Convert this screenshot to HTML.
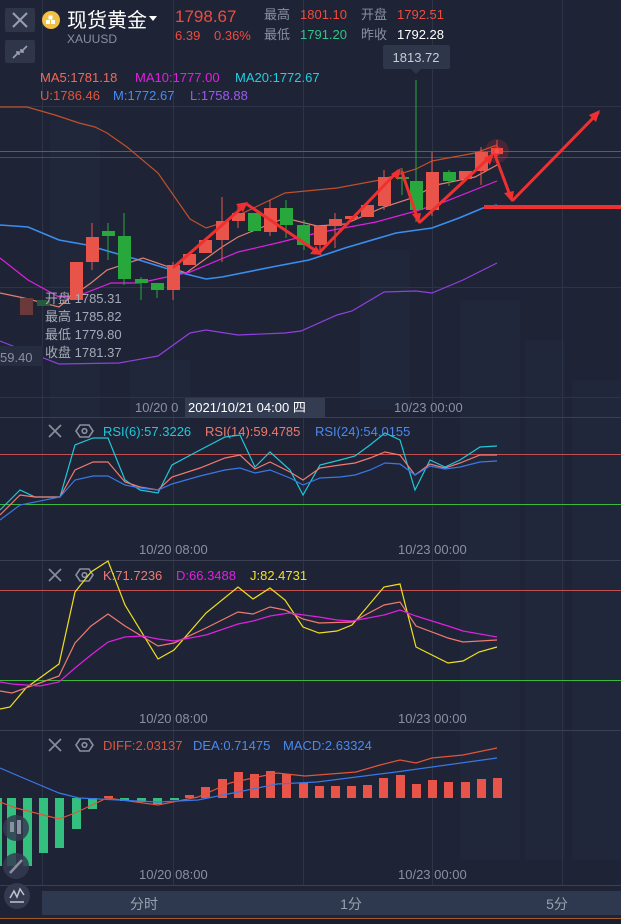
<!DOCTYPE html>
<html><head><meta charset="utf-8"><style>
html,body{margin:0;padding:0;background:#1e2336;width:621px;height:924px;overflow:hidden}
svg{display:block}
text{font-family:"Liberation Sans","Noto Sans CJK SC",sans-serif}
</style></head><body>
<svg width="621" height="924" viewBox="0 0 621 924" xmlns="http://www.w3.org/2000/svg">
<rect width="621" height="924" fill="#1e2336"/>
<!-- faint buildings -->
<g fill="#21273a">
<rect x="460" y="300" width="60" height="560"/><rect x="525" y="340" width="40" height="520"/><rect x="572" y="380" width="49" height="480"/>
<rect x="50" y="120" width="50" height="300"/><rect x="130" y="360" width="60" height="60"/><rect x="360" y="250" width="50" height="160"/>
</g>
<!-- grid -->
<g stroke="#2e3447" stroke-width="1">
<line x1="42.5" y1="0" x2="42.5" y2="885"/><line x1="173.5" y1="0" x2="173.5" y2="885"/><line x1="303.5" y1="0" x2="303.5" y2="885"/><line x1="432.5" y1="0" x2="432.5" y2="885"/><line x1="562.5" y1="0" x2="562.5" y2="885"/>
<line x1="0" y1="106.5" x2="621" y2="106.5"/><line x1="0" y1="287.5" x2="621" y2="287.5"/><line x1="0" y1="397.5" x2="621" y2="397.5"/>
</g>
<g stroke="#3a4052"><line x1="0" y1="417.5" x2="621" y2="417.5"/><line x1="0" y1="560.5" x2="621" y2="560.5"/><line x1="0" y1="730.5" x2="621" y2="730.5"/><line x1="0" y1="885.5" x2="621" y2="885.5"/></g>
<line x1="0" y1="151.5" x2="621" y2="151.5" stroke="#7a5058"/>
<line x1="0" y1="157.5" x2="621" y2="157.5" stroke="#454b60"/>

<!-- top-left buttons -->
<rect x="5" y="8" width="30" height="24" rx="2" fill="#30364a"/>
<path d="M13 13 L27 27 M27 13 L13 27" stroke="#9aa0ae" stroke-width="2"/>
<rect x="5" y="40" width="30" height="23" rx="2" fill="#30364a"/>
<path d="M13 58 L19 52 M16 52 L19 52 L19 55 M27 46 L21 52 M21 49 L21 52 L24 52" stroke="#9aa0ae" stroke-width="1.6" fill="none"/>

<!-- header -->
<circle cx="51" cy="20" r="9" fill="#f1c042"/>
<rect x="46" y="20" width="4" height="4" fill="#fff"/><rect x="51" y="20" width="4" height="4" fill="#fff"/><rect x="48.5" y="15.5" width="4" height="4" fill="#fff"/>
<text x="67" y="27" font-size="20" fill="#fff">现货黄金</text>
<path d="M149 16 L157 16 L153 21 Z" fill="#fff"/>
<text x="67" y="43" font-size="12" fill="#8a90a0">XAUUSD</text>
<text x="175" y="22" font-size="17" fill="#f04c3c">1798.67</text>
<text x="175" y="40" font-size="13" fill="#f04c3c">6.39</text>
<text x="214" y="40" font-size="13" fill="#f04c3c">0.36%</text>
<text x="264" y="19" font-size="13" fill="#8a90a0">最高</text>
<text x="300" y="19" font-size="13" fill="#f04c3c">1801.10</text>
<text x="361" y="19" font-size="13" fill="#8a90a0">开盘</text>
<text x="397" y="19" font-size="13" fill="#f04c3c">1792.51</text>
<text x="264" y="39" font-size="13" fill="#8a90a0">最低</text>
<text x="300" y="39" font-size="13" fill="#2fc48a">1791.20</text>
<text x="361" y="39" font-size="13" fill="#8a90a0">昨收</text>
<text x="397" y="39" font-size="13" fill="#fff">1792.28</text>

<text x="40" y="82" font-size="13" fill="#f06a5a">MA5:1781.18</text>
<text x="135" y="82" font-size="13" fill="#e020e0">MA10:1777.00</text>
<text x="235" y="82" font-size="13" fill="#20d0e0">MA20:1772.67</text>
<text x="40" y="100" font-size="13" fill="#e0553a">U:1786.46</text>
<text x="113" y="100" font-size="13" fill="#4a8af0">M:1772.67</text>
<text x="190" y="100" font-size="13" fill="#9a5af0">L:1758.88</text>

<!-- tooltip 1813.72 -->
<rect x="383" y="45" width="67" height="24" rx="2" fill="#2e3649"/>
<path d="M411 69 L421 69 L416 74 Z" fill="#2e3649"/>
<text x="416" y="62" font-size="13" fill="#c8ccd6" text-anchor="middle">1813.72</text>

<!-- bands & MAs -->
<g fill="none" stroke-width="1.2">
<polyline stroke="#c0502a" points="0,107 27,107 55,115 79,123 95,127 107,133 127,147 158,173 190,219 206,228 222,223 285,193 337,188 380,180 416,169 432,161 475,153 497,145"/>
<polyline stroke="#3a8ef0" stroke-width="1.6" points="0,225 28,227 59,240 87,245 111,252 139,260 178,272 206,279 222,277 277,266 309,260 345,248 396,233 432,228 459,218 483,208 497,205"/>
<polyline stroke="#9040e0" points="0,341 59,364 119,363 158,356 190,333 206,330 238,335 285,333 301,331 337,315 352,311 384,292 416,291 432,293 463,280 497,263"/>
<polyline stroke="#e08070" points="0,293 24,298 59,307 71,297 91,283 107,270 143,258 186,273 222,247 238,237 285,218 317,226 345,224 384,207 412,198 436,185 475,177 497,165"/>
<polyline stroke="#e020e0" points="0,258 28,280 59,297 75,297 111,283 139,283 190,272 238,252 277,243 317,233 376,222 416,211 444,202 497,181"/>
</g>

<!-- candles -->
<g>
<rect x="20" y="298" width="13" height="17" fill="#6a3a3a"/>
<rect x="37" y="300" width="13" height="6" fill="#275a3a"/>
<g fill="#e8544a" stroke="#e8544a">
<line x1="92" y1="223" x2="92" y2="270"/><line x1="238" y1="205" x2="238" y2="228"/><line x1="222" y1="197" x2="222" y2="262"/>
<line x1="270" y1="200" x2="270" y2="236"/><line x1="335" y1="213" x2="335" y2="248"/><line x1="384" y1="170" x2="384" y2="210"/>
<line x1="432" y1="152" x2="432" y2="216"/><line x1="481" y1="147" x2="481" y2="185"/><line x1="497" y1="140" x2="497" y2="165"/><line x1="320" y1="226" x2="320" y2="250"/>
</g>
<g fill="#28a83c" stroke="#28a83c">
<line x1="108" y1="223" x2="108" y2="260"/><line x1="124" y1="213" x2="124" y2="285"/><line x1="141" y1="277" x2="141" y2="300"/><line x1="286" y1="200" x2="286" y2="238"/><line x1="304" y1="220" x2="304" y2="250"/>
<line x1="416" y1="80" x2="416" y2="222"/><line x1="402" y1="168" x2="402" y2="195"/><line x1="449" y1="170" x2="449" y2="186"/>
</g>
<g fill="#e8544a">
<rect x="70" y="262" width="13" height="38"/><rect x="86" y="237" width="13" height="25"/><rect x="167" y="265" width="13" height="25"/>
<rect x="183" y="254" width="13" height="11"/><rect x="199" y="240" width="13" height="13"/><rect x="216" y="221" width="13" height="19"/>
<rect x="232" y="213" width="13" height="8"/><rect x="264" y="208" width="13" height="24"/><rect x="314" y="226" width="13" height="19"/>
<rect x="329" y="219" width="13" height="7"/><rect x="345" y="216" width="13" height="3"/><rect x="361" y="205" width="13" height="12"/>
<rect x="378" y="177" width="13" height="29"/><rect x="426" y="172" width="13" height="38"/><rect x="459" y="171" width="13" height="8"/>
<rect x="475" y="152" width="13" height="19"/><rect x="491" y="148" width="12" height="6"/>
</g>
<g fill="#28a83c">
<rect x="102" y="231" width="13" height="5"/><rect x="118" y="236" width="13" height="43"/><rect x="135" y="279" width="13" height="4"/>
<rect x="151" y="283" width="13" height="7"/><rect x="248" y="213" width="13" height="18"/><rect x="280" y="208" width="13" height="17"/>
<rect x="297" y="225" width="13" height="20"/><rect x="396" y="177" width="13" height="2"/><rect x="410" y="181" width="13" height="29"/>
<rect x="443" y="172" width="13" height="9"/>
</g>
</g>
<line x1="157" y1="283" x2="157" y2="298" stroke="#28a83c"/><line x1="173" y1="262" x2="173" y2="300" stroke="#e8544a"/>

<!-- glow -->
<circle cx="497" cy="151" r="12" fill="#ff3030" opacity="0.18"/><circle cx="497" cy="151" r="5" fill="#ff3030" opacity="0.45"/><circle cx="497" cy="151" r="2" fill="#ff5050"/>

<!-- red arrows -->
<g stroke="#f03030" stroke-width="3" fill="none" stroke-linecap="round">
<line x1="174" y1="267" x2="244" y2="206"/><line x1="248" y1="205" x2="319" y2="253"/>
<line x1="319" y1="253" x2="398" y2="171"/><line x1="402" y1="172" x2="418" y2="220"/>
<line x1="420" y1="222" x2="491" y2="156"/><line x1="495" y1="155" x2="511" y2="198"/>
<line x1="513" y1="200" x2="598" y2="113"/>
</g>
<g fill="#f03030">
<path d="M248 202 L236 204 L243 212 Z"/><path d="M322 255 L310 254 L316 246 Z"/><path d="M401 168 L398 180 L391 174 Z"/>
<path d="M419 224 L412 214 L421 213 Z"/><path d="M494 153 L490 165 L484 158 Z"/><path d="M512 202 L504 193 L514 191 Z"/>
<path d="M600 110 L596 122 L589 115 Z"/>
</g>
<rect x="484" y="205" width="137" height="4" fill="#f03030"/>

<!-- left tooltip -->
<g font-size="13" fill="#a6aab6">
<text x="45" y="303">开盘 1785.31</text><text x="45" y="321">最高 1785.82</text><text x="45" y="339">最低 1779.80</text><text x="45" y="357">收盘 1781.37</text>
</g>
<rect x="0" y="346" width="43" height="20" fill="#262d40"/>
<text x="0" y="362" font-size="13" fill="#8a90a0">59.40</text>

<!-- date axis main -->
<text x="135" y="412" font-size="13" fill="#8a90a0">10/20 0</text>
<rect x="185" y="398" width="140" height="19" fill="#343c52"/>
<text x="188" y="412" font-size="13" fill="#fff">2021/10/21 04:00 四</text>
<text x="394" y="412" font-size="13" fill="#8a90a0">10/23 00:00</text>

<!-- panel headers icons -->
<g stroke="#8a90a0" stroke-width="1.6" fill="none">
<path d="M49 425 L61 437 M61 425 L49 437"/><path d="M80 425 L89 425 L93 431 L89 437 L80 437 L76 431 Z"/><circle cx="84.5" cy="431" r="2.3"/>
<path d="M49 569 L61 581 M61 569 L49 581"/><path d="M80 569 L89 569 L93 575 L89 581 L80 581 L76 575 Z"/><circle cx="84.5" cy="575" r="2.3"/>
<path d="M49 739 L61 751 M61 739 L49 751"/><path d="M80 739 L89 739 L93 745 L89 751 L80 751 L76 745 Z"/><circle cx="84.5" cy="745" r="2.3"/>
</g>

<!-- RSI -->
<text x="103" y="436" font-size="13" fill="#20c8d8">RSI(6):57.3226</text>
<text x="205" y="436" font-size="13" fill="#f07a70">RSI(14):59.4785</text>
<text x="315" y="436" font-size="13" fill="#4a8af0">RSI(24):54.0155</text>
<line x1="0" y1="454.5" x2="621" y2="454.5" stroke="#c05050"/>
<line x1="0" y1="504.5" x2="621" y2="504.5" stroke="#3cb83c"/>
<g fill="none" stroke-width="1.2">
<polyline stroke="#20c8d8" points="0,510 10,500 20,490 35,497 60,497 75,445 93,438 108,438 125,480 140,490 158,493 172,465 200,450 225,437 240,435 255,467 270,452 290,470 303,495 320,465 340,460 355,456 370,445 385,433 400,440 415,490 430,460 445,467 460,460 480,447 497,446"/>
<polyline stroke="#f07a70" points="0,515 20,495 35,497 60,497 75,470 93,462 108,462 125,482 140,487 158,490 172,477 200,468 225,458 240,455 255,469 270,462 290,472 303,480 320,468 340,465 355,463 370,458 385,452 400,455 415,475 430,464 445,468 460,463 480,455 497,455"/>
<polyline stroke="#3a78e8" points="0,520 20,505 60,497 75,480 93,476 108,476 125,485 140,488 158,490 172,484 200,476 225,470 240,468 255,473 270,470 290,478 303,485 320,478 340,477 355,475 370,470 385,463 400,464 415,475 430,466 445,469 460,467 480,462 497,461"/>
</g>
<text x="139" y="554" font-size="13" fill="#8a90a0">10/20 08:00</text>
<text x="398" y="554" font-size="13" fill="#8a90a0">10/23 00:00</text>

<!-- KDJ -->
<text x="103" y="580" font-size="13" fill="#f07a70">K:71.7236</text>
<text x="176" y="580" font-size="13" fill="#e020e0">D:66.3488</text>
<text x="250" y="580" font-size="13" fill="#f0e020">J:82.4731</text>
<line x1="0" y1="590.5" x2="621" y2="590.5" stroke="#c05050"/>
<line x1="0" y1="680.5" x2="621" y2="680.5" stroke="#3cb83c"/>
<g fill="none" stroke-width="1.2">
<polyline stroke="#f0e020" points="0,709 10,707 26,688 59,664 75,592 91,572 108,561 125,605 158,659 174,650 206,613 238,587 253,599 270,588 285,600 303,627 319,633 337,631 352,625 384,587 400,584 416,647 448,663 463,661 479,652 497,647"/>
<polyline stroke="#f07a70" points="0,691 12,693 59,676 75,643 91,626 108,614 125,626 158,646 174,643 206,628 238,612 253,614 270,607 285,610 303,619 319,623 352,622 384,605 400,602 416,626 448,638 463,642 497,640"/>
<polyline stroke="#e020e0" points="0,682 12,684 40,686 59,682 75,668 91,655 108,642 125,637 143,636 158,639 174,641 206,635 238,624 253,621 270,616 289,613 319,617 337,620 352,621 384,615 400,610 416,616 448,626 463,631 497,637"/>
</g>
<text x="139" y="723" font-size="13" fill="#8a90a0">10/20 08:00</text>
<text x="398" y="723" font-size="13" fill="#8a90a0">10/23 00:00</text>

<!-- MACD -->
<text x="103" y="750" font-size="13" fill="#e0553a">DIFF:2.03137</text>
<text x="193" y="750" font-size="13" fill="#4a8af0">DEA:0.71475</text>
<text x="283" y="750" font-size="13" fill="#4a8af0">MACD:2.63324</text>
<g fill="#33c07e">
<rect x="0" y="798" width="2" height="68"/><rect x="7" y="798" width="9" height="68"/><rect x="23" y="798" width="9" height="68"/>
<rect x="39" y="798" width="9" height="55"/><rect x="55" y="798" width="9" height="50"/><rect x="72" y="798" width="9" height="31"/>
<rect x="88" y="798" width="9" height="11"/><rect x="120" y="798" width="9" height="3"/><rect x="137" y="798" width="9" height="4"/>
<rect x="153" y="798" width="9" height="6"/><rect x="170" y="798" width="9" height="2"/>
</g>
<g fill="#e8544a">
<rect x="104" y="796" width="9" height="2"/><rect x="185" y="795" width="9" height="3"/><rect x="201" y="787" width="9" height="11"/>
<rect x="218" y="779" width="9" height="19"/><rect x="234" y="772" width="9" height="26"/><rect x="250" y="774" width="9" height="24"/>
<rect x="266" y="771" width="9" height="27"/><rect x="282" y="774" width="9" height="24"/><rect x="299" y="783" width="9" height="15"/>
<rect x="315" y="786" width="9" height="12"/><rect x="331" y="786" width="9" height="12"/><rect x="347" y="786" width="9" height="12"/>
<rect x="363" y="785" width="9" height="13"/><rect x="379" y="778" width="9" height="20"/><rect x="396" y="775" width="9" height="23"/>
<rect x="412" y="784" width="9" height="14"/><rect x="428" y="780" width="9" height="18"/><rect x="444" y="782" width="9" height="16"/>
<rect x="461" y="782" width="9" height="16"/><rect x="477" y="779" width="9" height="19"/><rect x="493" y="778" width="9" height="20"/>
</g>
<g fill="none" stroke-width="1.2">
<polyline stroke="#e0553a" points="0,802 16,808 59,819 75,813 107,798 158,805 198,797 230,783 253,778 277,773 305,776 356,772 380,765 400,760 416,763 432,758 463,755 497,748"/>
<polyline stroke="#3a78e8" points="0,768 28,780 59,793 79,798 158,802 198,800 238,792 277,784 317,782 396,772 497,758"/>
</g>
<text x="139" y="879" font-size="13" fill="#8a90a0">10/20 08:00</text>
<text x="398" y="879" font-size="13" fill="#8a90a0">10/23 00:00</text>

<!-- left side float icons -->
<circle cx="16" cy="828" r="13" fill="#343b50" opacity="0.85"/>
<rect x="10" y="822" width="4" height="10" fill="#8a90a0"/><rect x="17" y="820" width="4" height="14" fill="#8a90a0"/>
<circle cx="16" cy="866" r="13" fill="#343b50" opacity="0.85"/>
<path d="M10 873 L22 860" stroke="#8a90a0" stroke-width="2.5"/>
<circle cx="17" cy="896" r="13" fill="#343b50"/>
<path d="M10 898 L14 891 L17 897 L20 889 L24 895 M10 902 L24 902" stroke="#c0c4ce" stroke-width="1.5" fill="none"/>

<!-- bottom tabs -->
<rect x="42" y="891" width="579" height="24" fill="#2e384f"/>
<text x="144" y="909" font-size="14" fill="#9aa0ae" text-anchor="middle">分时</text>
<text x="351" y="909" font-size="14" fill="#9aa0ae" text-anchor="middle">1分</text>
<text x="557" y="909" font-size="14" fill="#9aa0ae" text-anchor="middle">5分</text>
<rect x="0" y="918" width="621" height="1" fill="#a05a2a"/>
<rect x="0" y="919" width="621" height="5" fill="#1a1f30"/>
</svg>
</body></html>
